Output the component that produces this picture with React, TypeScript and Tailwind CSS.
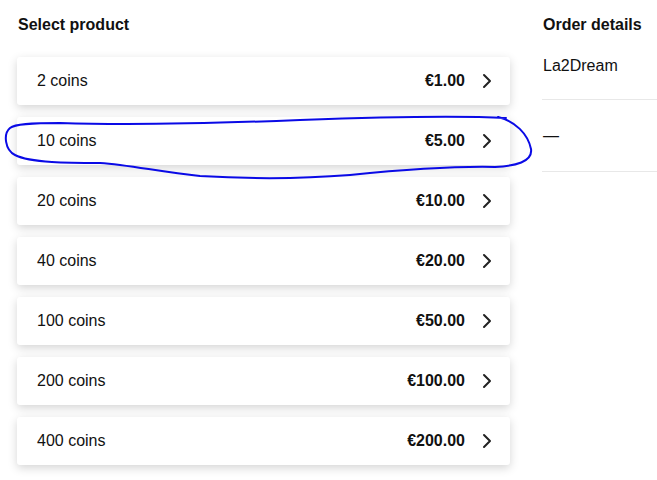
import { useState } from 'react';

interface Product {
  id: string;
  label: string;
  price: string;
}

const products: Product[] = [
  { id: 'p2', label: '2 coins', price: '€1.00' },
  { id: 'p10', label: '10 coins', price: '€5.00' },
  { id: 'p20', label: '20 coins', price: '€10.00' },
  { id: 'p40', label: '40 coins', price: '€20.00' },
  { id: 'p100', label: '100 coins', price: '€50.00' },
  { id: 'p200', label: '200 coins', price: '€100.00' },
  { id: 'p400', label: '400 coins', price: '€200.00' },
];

function Chevron() {
  return (
    <svg width="10" height="16" viewBox="0 0 10 16" fill="none" className="shrink-0">
      <polyline
        points="2,2 8,8 2,14"
        stroke="#222"
        strokeWidth="2"
        strokeLinecap="round"
        strokeLinejoin="round"
      />
    </svg>
  );
}

// hand-drawn highlight around the second row
function Scribble() {
  return (
    <svg
      className="pointer-events-none absolute left-0 top-0"
      width="540"
      height="190"
      viewBox="0 0 540 190"
      fill="none"
    >
      <path
        d="M 498 117 C 515 121, 528 134, 531 149 C 533 162, 515 166, 495 167 C 450 166, 400 170, 350 175 C 300 179, 250 179, 200 176 C 160 172, 130 165, 100 163 C 70 163, 30 163, 15 155 C 5 150, 3 134, 10 128 C 15 124, 30 123, 60 123 C 120 125, 200 124, 300 120 C 380 117, 450 115, 506 118"
        stroke="#0a0ae6"
        strokeWidth="2"
        strokeLinecap="round"
        strokeLinejoin="round"
      />
    </svg>
  );
}

export default function App() {
  const [selected, setSelected] = useState<string | null>(null);
  const current = products.find((p) => p.id === selected);

  return (
    <div
      className="relative flex min-h-[480px] w-full gap-8 overflow-hidden bg-white pl-[17px] pt-[13px] text-[#111]"
      style={{ fontFamily: '"Liberation Sans", Arial, sans-serif' }}
    >
      {/* product list */}
      <div className="w-[493px] shrink-0">
        <h2 className="mb-5 pl-px text-base font-bold leading-6">Select product</h2>
        <div className="flex flex-col gap-3">
          {products.map((p) => (
            <button
              key={p.id}
              onClick={() => setSelected(p.id)}
              className="flex h-12 items-center rounded-[3px] bg-white pl-5 pr-[18px] text-left shadow-[0_3px_10px_rgba(0,0,0,0.17)]"
            >
              <span className="flex-1 text-base leading-6">{p.label}</span>
              <span className="mr-[17px] text-base font-bold leading-6">{p.price}</span>
              <Chevron />
            </button>
          ))}
        </div>
      </div>

      {/* order details */}
      <div className="flex-1">
        <h2 className="pl-px text-base font-bold leading-6">Order details</h2>
        <div className="border-b border-[#e8e8e8] pb-[21px] pl-px pt-[17px] text-base leading-6">La2Dream</div>
        <div className="border-b border-[#e8e8e8] pb-[23px] pl-px pt-6 text-base leading-6">
          {current ? current.label : '—'}
        </div>
      </div>

      <Scribble />
    </div>
  );
}
